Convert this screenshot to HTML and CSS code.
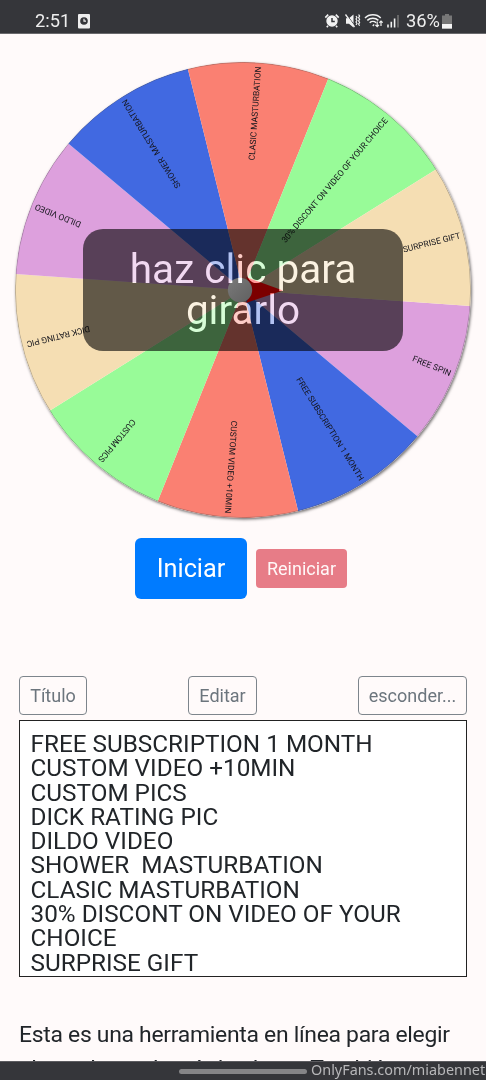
FILE: index.html
```html
<!DOCTYPE html>
<html lang="es">
<head>
<meta charset="utf-8">
<meta name="viewport" content="width=device-width">
<title>Ruleta</title>
<link rel="stylesheet" href="styles.css">
</head>
<body>
<div class="screen">
  <header class="status">
    <span class="time">2:51</span>
    <svg class="app-icon" width="12" height="15" viewBox="0 0 12 15"><rect width="12" height="14.5" rx="1" fill="#eee"/><circle cx="6" cy="7" r="3.8" fill="#35363a"/><path d="M6 4.8V7.2H8" stroke="#eee" stroke-width="1.2" fill="none"/></svg>
    <svg class="status-icons" width="76" height="16" viewBox="0 0 76 16">
      <g fill="none" stroke="#f2f2f2">
        <circle cx="8" cy="8" r="5" fill="#f2f2f2" stroke-width="1.4"/>
        <path d="M1.3 4.6 4.2 1.6M11.8 1.6l2.9 3M4 12.7l-1.2 1.5M12 12.7l1.2 1.5" stroke-width="1.6"/>
        <path d="M8 5V8.5H10.8" stroke="#35363a" stroke-width="1.5"/>
        <path d="M22 5.3h3L29.5 1.5v13L25 10.8h-3z" fill="#f2f2f2" stroke="none"/>
        <path d="M22.5 1.5 31 13" stroke="#35363a" stroke-width="1"/><path d="M21.5 1.5 30.5 14" stroke-width="1.3"/>
        <path d="M32 3l1 1.5-1 1.5 1 1.5-1 1.5 1 1.5-1 1.5M34.6 1.5l1 1.6-1 1.6 1 1.6-1 1.6 1 1.6-1 1.6 1 1.6" stroke-width="1.2"/>
        <path d="M41 4.9c4.1-4.3 11.8-4.3 15.7 0M43.3 7.4c3.1-3 8-3 11.1 0M45.7 9.8c1.8-1.7 4.6-1.7 6.4 0" stroke-width="1.5"/>
        <path d="M49 11.8l.9.9" stroke-width="2"/>
        <path d="M53.2 8.5v5.2m-1.8-1.8 1.8 1.8 1.8-1.8M57 13V8m-1.7 1.7L57 8l1.7 1.7" stroke-width="1.2"/>
        <path d="M64 11.5v3M67.3 8.7v5.8M70.6 5.5v9" stroke-width="1.6"/><path d="M74 2v12.5" stroke="#777" stroke-width="1.5"/>
      </g>
    </svg>
    <span class="percent">36%</span>
    <svg class="battery" width="10" height="15" viewBox="0 0 10 15"><path d="M3 0h4v1.5h3V15H0V1.5h3z" fill="#777"/><path d="M0 10h10v4.5H0z" fill="#f5f5f5"/></svg>
  </header>

  <main class="page">
    <section class="wheel-box">
      <svg class="wheel" width="456" height="456" viewBox="-228 -228 456 456">
        <defs>
          <path id="slice" d="M0 0H228A228 228 0 0 1 184.456 134.015Z"/>
        </defs>
        <g>
          <use href="#slice" transform="rotate(4)" fill="#dda0dd"/>
          <use href="#slice" transform="rotate(40)" fill="#4169e1"/>
          <use href="#slice" transform="rotate(76)" fill="#fa8072"/>
          <use href="#slice" transform="rotate(112)" fill="#98fb98"/>
          <use href="#slice" transform="rotate(148)" fill="#f5deb3"/>
          <use href="#slice" transform="rotate(184)" fill="#dda0dd"/>
          <use href="#slice" transform="rotate(220)" fill="#4169e1"/>
          <use href="#slice" transform="rotate(256)" fill="#fa8072"/>
          <use href="#slice" transform="rotate(292)" fill="#98fb98"/>
          <use href="#slice" transform="rotate(328)" fill="#f5deb3"/>
        </g>
        <circle r="227.7" fill="none" stroke="#555" stroke-opacity=".55" stroke-width=".7"/>
        <g class="labels">
          <text transform="rotate(22)" x="183" y="2.5" textLength="41">FREE SPIN</text>
          <text transform="rotate(58)" x="104" y="2.5" textLength="120">FREE SUBSCRIPTION 1 MONTH</text>
          <text transform="rotate(94)" x="131" y="2.5" textLength="93">CUSTOM VIDEO +10MIN</text>
          <text transform="rotate(130)" x="170" y="2.5" textLength="53">CUSTOM PICS</text>
          <text transform="rotate(166)" x="158" y="2.5" textLength="65">DICK RATING PIC</text>
          <text transform="rotate(202)" x="175" y="2.5" textLength="49">DILDO VIDEO</text>
          <text transform="rotate(238)" x="121" y="2.5" textLength="103">SHOWER&#160; MASTURBATION</text>
          <text transform="rotate(274)" x="130" y="2.5" textLength="94">CLASIC MASTURBATION</text>
          <text transform="rotate(310)" x="63" y="2.5" textLength="160">30% DISCONT ON VIDEO OF YOUR CHOICE</text>
          <text transform="rotate(346)" x="165" y="2.5" textLength="59">SURPRISE GIFT</text>
        </g>
      </svg>
      <div class="shade"></div>
      <svg class="pointer" width="60" height="30" viewBox="-20 -15 60 30">
        <defs><linearGradient id="knob" x2="1" y2="1"><stop stop-color="#7a7a7a"/><stop offset="1" stop-color="#606060"/></linearGradient></defs>
        <path d="M3-13 40 .5 3 13 9 0Z" fill="#7c0000"/>
        <circle cx="-3" cy="0" r="12.2" fill="url(#knob)"/>
      </svg>
      <div class="hint">haz clic para<br>girarlo</div>
    </section>

    <div class="actions">
      <button class="btn start">Iniciar</button>
      <button class="btn reset">Reiniciar</button>
    </div>

    <div class="tools">
      <button class="btn outline title-btn">Título</button>
      <button class="btn outline edit-btn">Editar</button>
      <button class="btn outline hide-btn">esconder...</button>
    </div>
    <div class="entries">FREE SUBSCRIPTION 1 MONTH
CUSTOM VIDEO +10MIN
CUSTOM PICS
DICK RATING PIC
DILDO VIDEO
SHOWER  MASTURBATION
CLASIC MASTURBATION
30% DISCONT ON VIDEO OF YOUR CHOICE
SURPRISE GIFT</div>
    <p class="about">Esta es una herramienta en línea para elegir<br>al azar la moda etía la alazar. También</p>
  </main>

  <footer class="navbar"><span class="handle"></span><span class="credit">OnlyFans.com/miabennet</span></footer>
</div>
</body>
</html>
```
FILE: styles.css
```css
* { box-sizing: border-box; }
body { margin: 0; background: #fffafa; font-family: Roboto, sans-serif; color: #212529; }
.screen { width: 486px; height: 1080px; display: flex; flex-direction: column; overflow: hidden; }

.status { flex: none; height: 34px; padding: 9px 34px 0 35px; display: flex; align-items: center; background: #35363a; border-bottom: 1px solid #69696c; color: #eee; font-size: 18.3px; line-height: 26px; }
.app-icon { margin-left: 8px; }
.status-icons { margin-left: auto; margin-right: 6px; }
.percent { margin-right: 2px; }

.page { flex: 1; min-height: 0; overflow: hidden; padding: 28px 19px 0; display: flex; flex-direction: column; }
.wheel-box { display: grid; place-items: center; height: 456px; flex: none; margin: 0 -4px; }
.wheel-box > * { grid-area: 1 / 1; }
.wheel { border-radius: 50%; box-shadow: 1px 1.5px 3px rgba(0, 0, 0, .55); }
.labels { font-size: 8.5px; fill: #15151c; }
.shade { width: 320px; height: 122px; border-radius: 20px; background: rgba(0, 0, 0, .6); }
.pointer { margin-left: 20px; }
.hint { width: 320px; height: 122px; padding-top: 20px; color: #999; mix-blend-mode: plus-lighter; text-align: center; font-size: 40.5px; line-height: 40.5px; }

.btn { font-family: inherit; border-radius: 4px; border: 0; padding: 0; text-align: center; font-size: 18px; }
.actions { flex: none; display: flex; align-items: center; justify-content: center; gap: 9px; height: 61px; margin: 20px 4px 0 0; }
.start { width: 112px; height: 61px; border-radius: 6px; background: #007bff; color: #fff; font-size: 25.3px; }
.reset { width: 91px; height: 39px; margin-top: -1px; background: #e77c87; color: #fff8f8; }
.tools { flex: none; display: flex; justify-content: space-between; margin-top: 76px; padding-top: 1px; }
.outline { height: 39px; padding-bottom: 1px; border: 1px solid #7d858c; background: transparent; color: #6c757d; }
.title-btn { width: 68px; }
.edit-btn { width: 69px; margin-left: 61px; margin-right: 61px; }
.hide-btn { width: 109px; }
.entries { flex: none; height: 257px; margin-top: 5px; padding: 11px 10.5px; overflow: hidden; border: 1px solid #222; background: #fff; font-size: 24.3px; line-height: 24.3px; white-space: pre-wrap; }
.about { flex: none; margin: 40.5px -19px 0 0; font-size: 22.9px; line-height: 34.4px; letter-spacing: -.28px; white-space: nowrap; }

.navbar { flex: none; height: 19px; display: flex; align-items: center; padding-left: 179px; background: #35363a; border-top: 1px solid #5c5c60; }
.handle { flex: none; width: 128px; height: 5px; border-radius: 3px; background: #858587; }
.credit { margin-left: 4px; margin-top: -2px; font: 14.4px/18px "Noto Sans", sans-serif; color: #b7b7b9; white-space: nowrap; }
```
